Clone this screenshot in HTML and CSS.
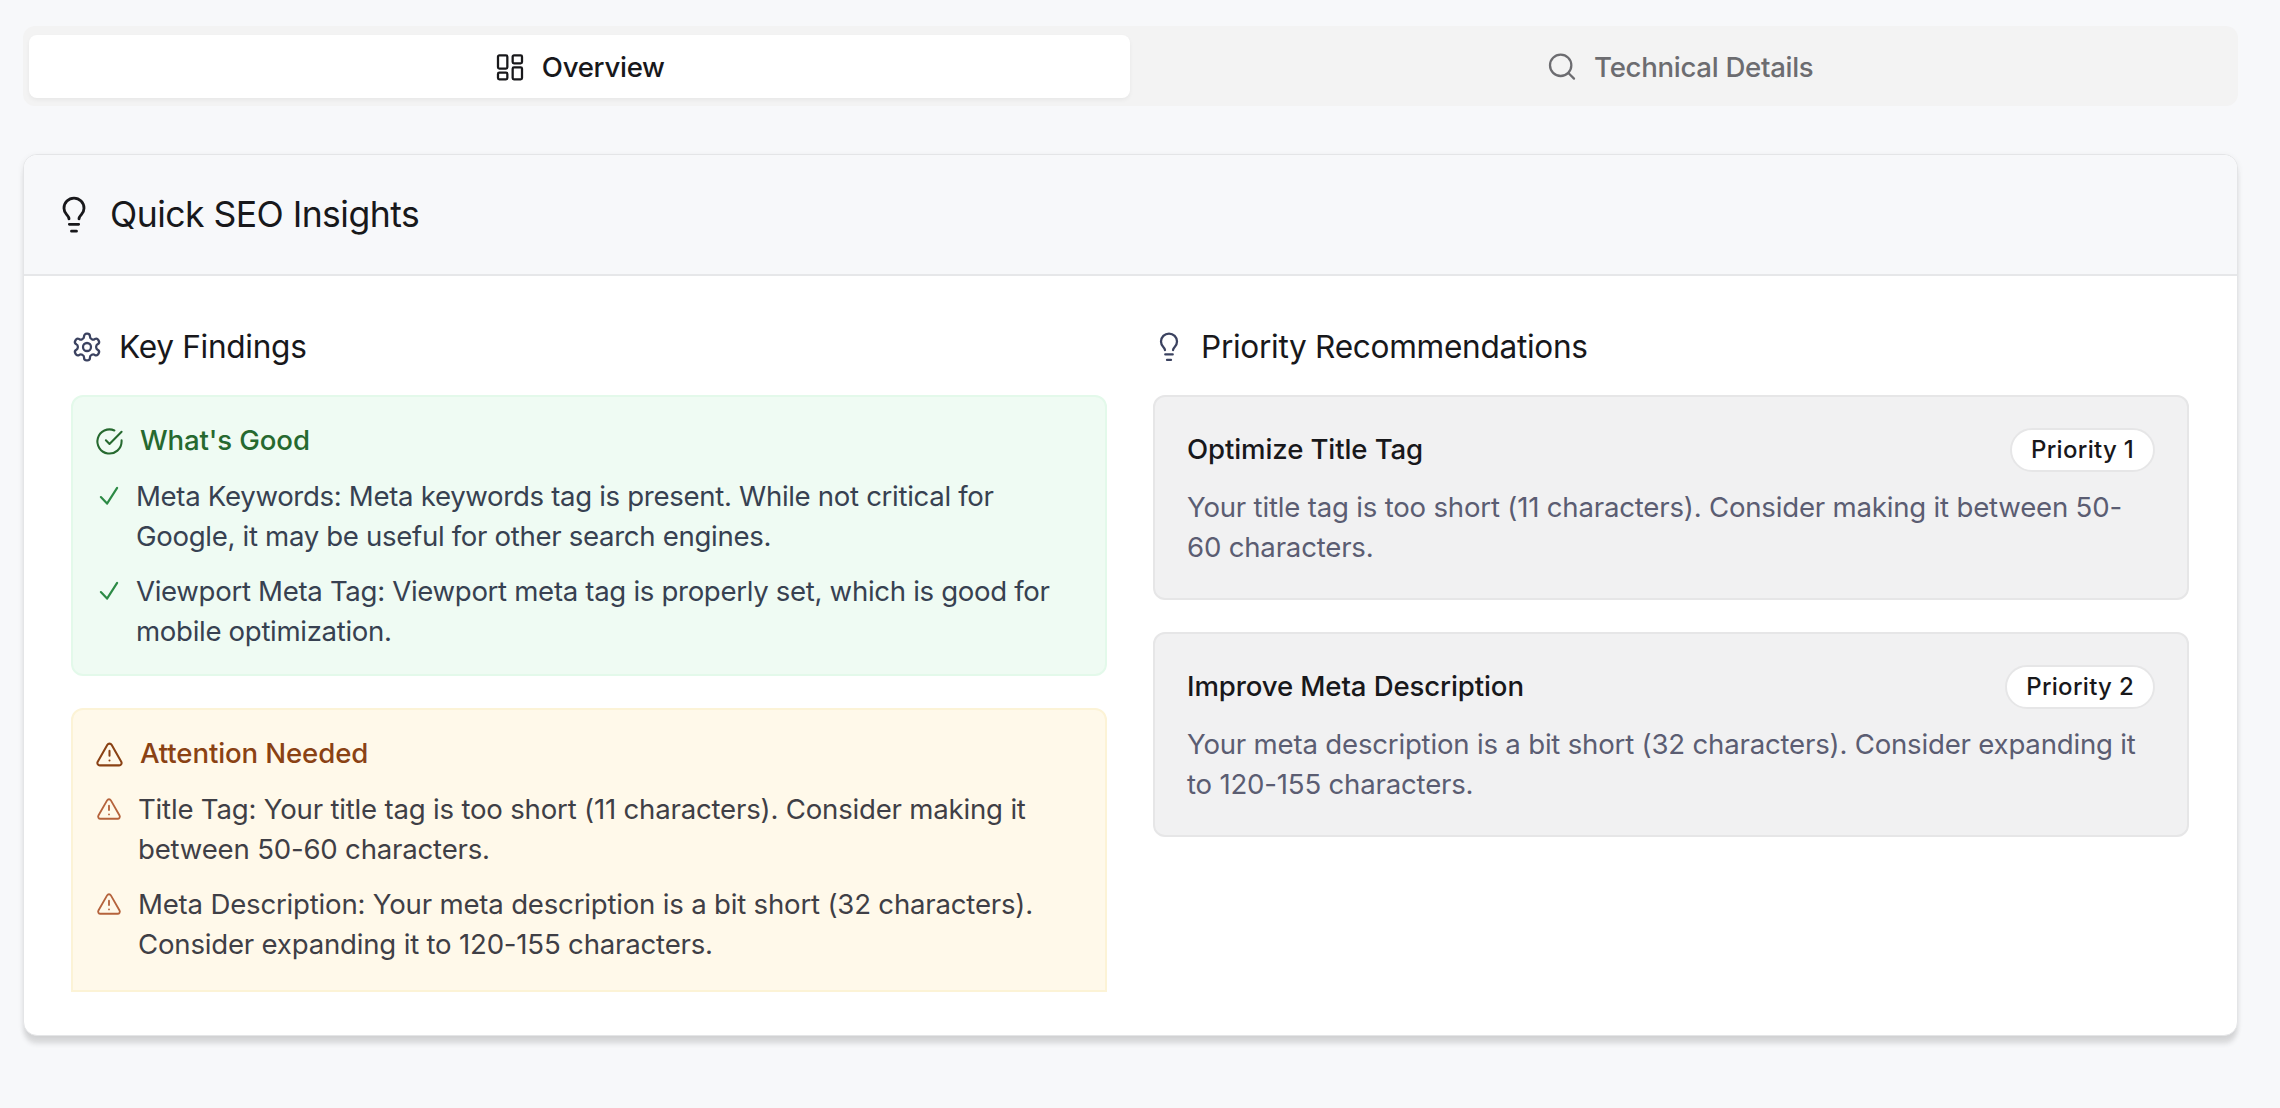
FILE: index.html
```html
<!DOCTYPE html>
<html lang="en">
<head>
<meta charset="utf-8">
<title>Quick SEO Insights</title>
<link rel="stylesheet" href="styles.css">
</head>
<body>
<svg class="sprite" aria-hidden="true">
  <symbol id="dashboard" viewBox="0 0 24 24"><rect x="3" y="2.500" width="7" height="10" rx="1"/><rect x="14" y="2.500" width="7" height="6" rx="1"/><rect x="14" y="11.500" width="7" height="9" rx="1"/><rect x="3" y="15.500" width="7" height="5" rx="1"/></symbol>
  <symbol id="search" viewBox="0 0 24 24"><circle cx="11" cy="10" r="8"/><path d="m21 20-4.200-4.200"/></symbol>
  <symbol id="bulb" viewBox="0 0 24 24"><path d="M15 14.300c.1-1.200.7-1.700 1.400-2.500.9-1 1.600-2.200 1.600-3.900A6 6 0 0 0 6 7.900c0 1.700.7 2.900 1.600 3.900.7.800 1.300 1.300 1.400 2.500M9.200 17.600h5.600M10.500 21.700h3"/></symbol>
  <symbol id="gear" viewBox="0 0 24 24"><path d="M12.220 2h-.440a2 2 0 0 0-2 2v.180a2 2 0 0 1-1 1.730l-.430.250a2 2 0 0 1-2 0l-.150-.080a2 2 0 0 0-2.730.730l-.220.380a2 2 0 0 0 .730 2.730l.150.100a2 2 0 0 1 1 1.720v.510a2 2 0 0 1-1 1.740l-.150.090a2 2 0 0 0-.730 2.730l.220.380a2 2 0 0 0 2.730.730l.150-.080a2 2 0 0 1 2 0l.430.250a2 2 0 0 1 1 1.730V20a2 2 0 0 0 2 2h.440a2 2 0 0 0 2-2v-.180a2 2 0 0 1 1-1.730l.430-.250a2 2 0 0 1 2 0l.150.080a2 2 0 0 0 2.730-.730l.220-.390a2 2 0 0 0-.730-2.730l-.150-.080a2 2 0 0 1-1-1.740v-.500a2 2 0 0 1 1-1.740l.150-.090a2 2 0 0 0 .730-2.730l-.220-.380a2 2 0 0 0-2.730-.730l-.150.080a2 2 0 0 1-2 0l-.430-.250a2 2 0 0 1-1-1.730V4a2 2 0 0 0-2-2z"/><circle cx="12" cy="12" r="3"/></symbol>
  <symbol id="circle-check" viewBox="0 0 24 24"><path d="M22 11.080V12a10 10 0 1 1-5.930-9.140"/><path d="M22 4 12 14.010l-3-3"/></symbol>
  <symbol id="check" viewBox="0 0 24 24"><path d="M19.500 4.500 10.200 19 4.500 13"/></symbol>
  <symbol id="alert" viewBox="0 0 24 24"><path d="m21.730 18-8-14a2 2 0 0 0-3.480 0l-8 14A2 2 0 0 0 4 21h16a2 2 0 0 0 1.730-3M12 9v4M12 17h.01"/></symbol>
</svg>

<nav class="tabs">
  <button class="tab tab-active"><svg class="icon"><use href="#dashboard"/></svg><span>Overview</span></button>
  <button class="tab"><svg class="icon"><use href="#search"/></svg><span>Technical Details</span></button>
</nav>

<main class="card">
  <header class="card-header">
    <svg class="icon icon-lg"><use href="#bulb"/></svg>
    <h1>Quick SEO Insights</h1>
  </header>
  <div class="card-body">
    <section>
      <h2><svg class="icon icon-slate"><use href="#gear"/></svg>Key Findings</h2>
      <div class="panel good">
        <h3><svg class="icon icon-md"><use href="#circle-check"/></svg>What's Good</h3>
        <ul>
          <li><svg class="icon icon-sm"><use href="#check"/></svg><span>Meta Keywords: Meta keywords tag is present. While not critical for<br>Google, it may be useful for other search engines.</span></li>
          <li><svg class="icon icon-sm"><use href="#check"/></svg><span>Viewport Meta Tag: Viewport meta tag is properly set, which is good for<br>mobile optimization.</span></li>
        </ul>
      </div>
      <div class="panel attention">
        <h3><svg class="icon icon-md"><use href="#alert"/></svg>Attention Needed</h3>
        <ul>
          <li><svg class="icon icon-sm"><use href="#alert"/></svg><span>Title Tag: Your title tag is too short (11 characters). Consider making it<br>between 50-60 characters.</span></li>
          <li><svg class="icon icon-sm"><use href="#alert"/></svg><span>Meta Description: Your meta description is a bit short (32 characters).<br>Consider expanding it to 120-155 characters.</span></li>
        </ul>
      </div>
    </section>
    <section>
      <h2><svg class="icon icon-slate"><use href="#bulb"/></svg>Priority Recommendations</h2>
      <article class="rec">
        <div class="rec-head"><h3>Optimize Title Tag</h3><span class="badge">Priority 1</span></div>
        <p>Your title tag is too short (11 characters). Consider making it between 50-<br>60 characters.</p>
      </article>
      <article class="rec">
        <div class="rec-head"><h3>Improve Meta Description</h3><span class="badge">Priority 2</span></div>
        <p>Your meta description is a bit short (32 characters). Consider expanding it<br>to 120-155 characters.</p>
      </article>
    </section>
  </div>
</main>
</body>
</html>
```
FILE: styles.css
```css
* { box-sizing: border-box; }
body {
  margin: 0;
  padding: 26px 42px 0 23px;
  height: 1108px;
  overflow: hidden;
  background: #f7f8fa;
  color: #18181b;
  font: 400 27.6px/39.6px Inter, "Liberation Sans", sans-serif;
}
h1, h2, h3, p, ul { margin: 0; padding: 0; font-weight: 400; list-style: none; }
.sprite { display: none; }
.icon {
  flex: none;
  width: 32px;
  height: 32px;
  fill: none;
  stroke: currentColor;
  stroke-width: 1.7;
  stroke-linecap: round;
  stroke-linejoin: round;
}
.icon-lg { width: 40px; height: 40px; }
.icon-md { width: 29px; height: 29px; }
.icon-slate { color: #3b4260; }

.tabs {
  display: grid;
  grid-template-columns: 1fr 1fr;
  height: 80px;
  padding: 9px 8px 8px 6px;
  border-radius: 12px;
  background: #f3f3f3;
}
.tab {
  display: flex;
  align-items: center;
  justify-content: center;
  gap: 16px;
  padding: 2px 0 0;
  border: 0;
  border-radius: 8px;
  background: none;
  color: #6c6c70;
  font: inherit;
  font-weight: 500;
  letter-spacing: -.3px;
}
.tab-active { background: #fff; color: #18181b; box-shadow: 0 2px 4px rgba(0, 0, 0, .05); }

.card {
  height: 882px;
  margin-top: 48px;
  border: 1px solid #e4e5e7;
  border-radius: 14px;
  background: #fff;
  box-shadow: 0 9px 5px -1px rgba(0, 0, 0, .11), 0 2px 6px rgba(0, 0, 0, .07);
  overflow: hidden;
}
.card-header {
  display: flex;
  align-items: center;
  gap: 16px;
  height: 121px;
  padding-left: 30px;
  border-bottom: 2px solid #e6e7e9;
  background: #f7f8fa;
}
h1 { padding-top: 1px; font-size: 35.600px; line-height: 48px; letter-spacing: -.55px; }
.card-body {
  display: grid;
  grid-template-columns: 1fr 1fr;
  gap: 46px;
  padding: 47px 48px 0 47px;
}
h2 {
  display: flex;
  align-items: center;
  gap: 16px;
  height: 47px;
  margin-bottom: 25px;
  font-size: 31.600px;
  letter-spacing: -.3px;
}
h3 { font-size: 27.600px; font-weight: 500; letter-spacing: -.12px; }
.panel { border: 2px solid; border-radius: 12px; padding: 24px 22px; }
.panel h3 { display: flex; align-items: center; gap: 16px; height: 40px; margin-bottom: 16px; }
.panel li { display: flex; gap: 14px; }
.panel li + li { margin-top: 16px; }
.icon-sm { width: 26px; height: 28px; margin: 5px 0 0 1px; }
.good { height: 281px; border-color: #e3f9ea; background: #effbf3; color: #374151; }
.good ul { letter-spacing: -.32px; }
.good h3 { color: #26692f; }
.good .icon-sm { color: #2c8a45; stroke-width: 2; }
.attention {
  height: 284px;
  margin-top: 32px;
  border-color: #fcf3d6;
  border-radius: 12px 12px 0 0;
  background: #fff9ea;
  color: #3f3f46;
}
.attention ul { letter-spacing: -.2px; }
.attention li { gap: 16px; }
.attention h3 { color: #8a4214; }
.attention .icon-sm { color: #b5633c; }
.rec {
  height: 205px;
  padding: 31px 32px 0;
  border: 2px solid #e6e6e7;
  border-radius: 12px;
  background: #f1f1f2;
}
.rec + .rec { margin-top: 32px; }
.rec-head { display: flex; align-items: center; justify-content: space-between; height: 44px; }
.rec p { margin-top: 16px; color: #5b5d72; letter-spacing: -.2px; }
.badge {
  height: 44px;
  padding: 0 19px;
  border: 2px solid #e6e6e7;
  border-radius: 22px;
  background: #fff;
  font-size: 24px;
  font-weight: 500;
  letter-spacing: .3px;
  line-height: 40px;
}
```
